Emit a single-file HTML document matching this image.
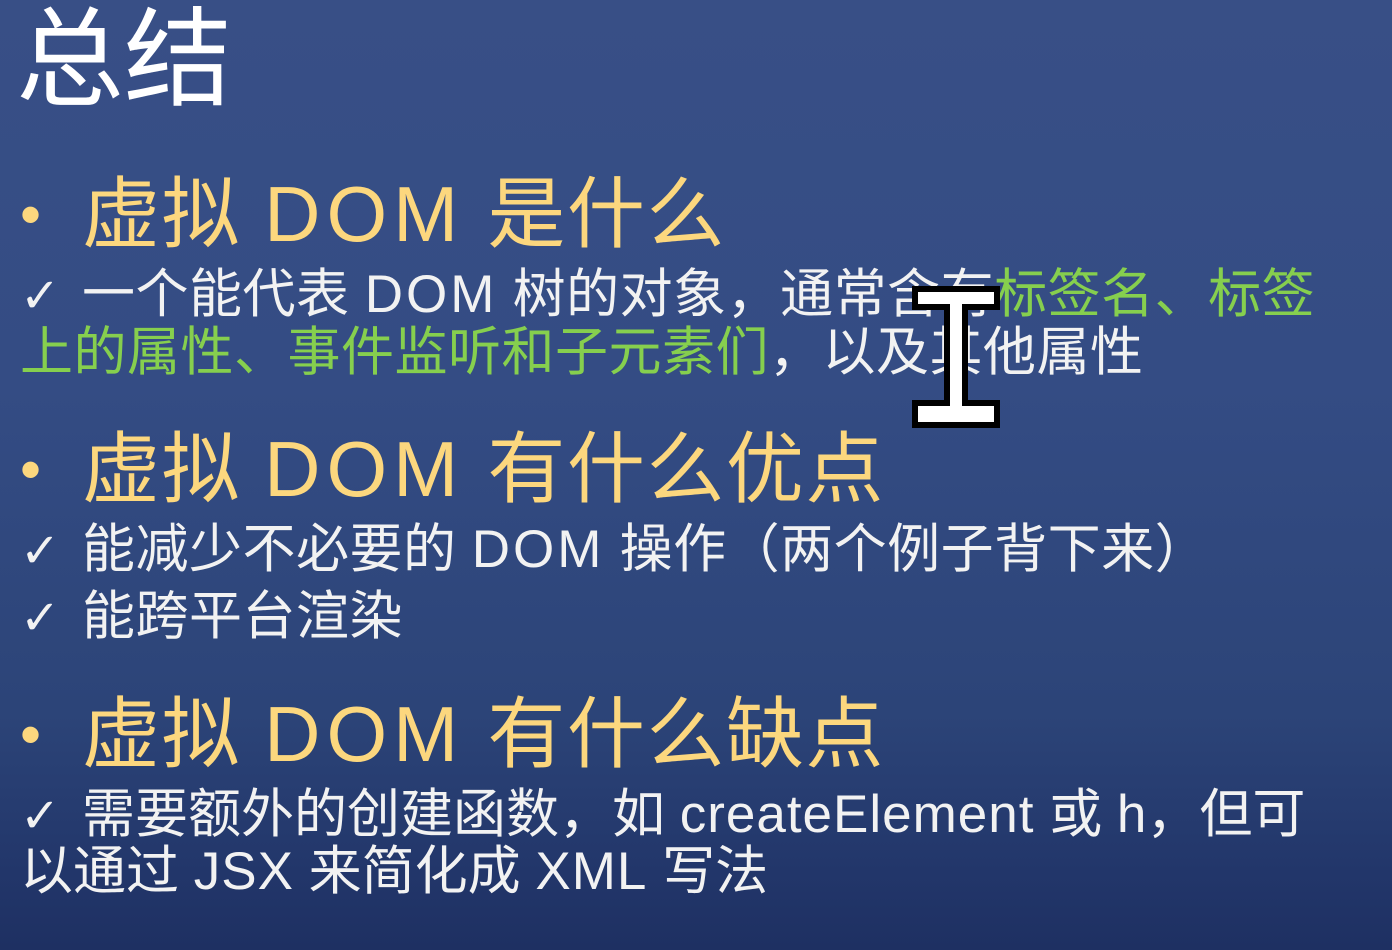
<!DOCTYPE html>
<html><head><meta charset="utf-8"><style>
html,body{margin:0;padding:0}
body{width:1392px;height:950px;overflow:hidden;position:relative;
background:linear-gradient(180deg,#384f86 0%,#344c84 40%,#2c4478 75%,#22366a 92%,#1e3062 100%);
font-family:"Liberation Sans","Noto Sans CJK SC",sans-serif;color:#f2f2f2}
.l{position:absolute;white-space:nowrap;line-height:1}
.t{left:16px;top:6px;font-size:108px;color:#fff}
.h{left:20px;font-size:78px;color:#fcd77e;letter-spacing:1.5px}
.h .b{display:inline-block;width:62px;font-size:60px;vertical-align:6px}
.h .d{letter-spacing:6px}
.s{left:20px;font-size:53px;letter-spacing:0.5px}
.s .d{letter-spacing:3px}
.s .e{letter-spacing:1px}
.g{color:#86cf4e}
.ck{display:inline-block;width:62px;font-family:"DejaVu Sans",sans-serif;font-size:48px;font-weight:bold}
</style></head><body>
<div class="l t">总结</div>
<div class="l h" style="top:175px"><span class="b">•</span>虚拟 <span class="d">DOM</span> 是什么</div>
<div class="l s" style="top:268px"><span class="ck">✓</span>一个能代表 <span class="d">DOM</span> 树的对象，通常含有<span class="g">标签名、标签</span></div>
<div class="l s g" style="top:326px">上的属性、事件监听和子元素们<span style="color:#f2f2f2">，以及其他属性</span></div>
<div class="l h" style="top:430px"><span class="b">•</span>虚拟 <span class="d">DOM</span> 有什么优点</div>
<div class="l s" style="top:523px"><span class="ck">✓</span>能减少不必要的 <span class="d">DOM</span> 操作（两个例子背下来）</div>
<div class="l s" style="top:590px"><span class="ck">✓</span>能跨平台渲染</div>
<div class="l h" style="top:695px"><span class="b">•</span>虚拟 <span class="d">DOM</span> 有什么缺点</div>
<div class="l s" style="top:788px;letter-spacing:0"><span class="ck">✓</span>需要额外的创建函数，如 <span class="e">createElement</span> 或 h，但可</div>
<div class="l s" style="top:845px;letter-spacing:0">以通过 <span class="e">JSX</span> 来简化成 <span class="e">XML</span> 写法</div>
<svg style="position:absolute;left:910px;top:282px" width="92" height="150" viewBox="0 0 92 150">
<path d="M2 4H90V28H58V118H90V146H2V118H34V28H2Z" fill="#000"/>
<path d="M8 10H84V22H52V124H84V140H8V124H40V22H8Z" fill="#fff"/>
</svg>
</body></html>
